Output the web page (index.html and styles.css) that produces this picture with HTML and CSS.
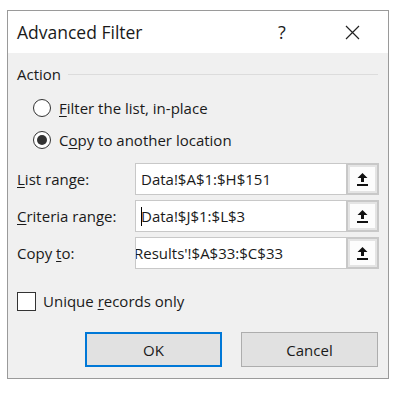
FILE: index.html
```html
<!DOCTYPE html>
<html lang="en">
<head>
	<meta charset="UTF-8">
	<title>Advanced Filter</title>
	<link rel="stylesheet" href="styles.css">
</head>
<body>
	<div class="dialog">
		<div class="title-bar">
			<span class="title">Advanced Filter</span>
			<span class="help">?</span>
			<span class="close">
				<svg width="15" height="15" viewBox="0 0 15 15"><path d="M1 1 L14 14 M14 1 L1 14" stroke="#222" stroke-width="1.2" fill="none"/></svg>
			</span>
		</div>
		<div class="dialog-body">
			<div class="group-title">
				<span>Action</span>
				<div class="group-line"></div>
			</div>
			<div class="radios">
				<label class="radio-row">
					<span class="radio"></span>
					<span><u>F</u>ilter the list, in-place</span>
				</label>
				<label class="radio-row">
					<span class="radio checked"></span>
					<span>C<u>o</u>py to another location</span>
				</label>
			</div>

			<div class="fields">
				<div class="field-row">
					<label class="field-label"><u>L</u>ist range:</label>
					<div class="range-box">
						<div class="range-text">Data!$A$1:$H$151</div>
						<div class="range-btn">
							<svg width="11" height="13" viewBox="0 0 11 13"><path d="M5.5 0 L10.5 5 L7 5 L7 9 L4 9 L4 5 L0.5 5 Z" fill="#111"/><rect x="0" y="11" width="11" height="2" fill="#111"/></svg>
						</div>
					</div>
				</div>
				<div class="field-row">
					<label class="field-label"><u>C</u>riteria range:</label>
					<div class="range-box">
						<div class="range-text"><span class="caret"></span>Data!$J$1:$L$3</div>
						<div class="range-btn">
							<svg width="11" height="13" viewBox="0 0 11 13"><path d="M5.5 0 L10.5 5 L7 5 L7 9 L4 9 L4 5 L0.5 5 Z" fill="#111"/><rect x="0" y="11" width="11" height="2" fill="#111"/></svg>
						</div>
					</div>
				</div>
				<div class="field-row">
					<label class="field-label">Copy <u>t</u>o:</label>
					<div class="range-box">
						<div class="range-text scrolled">Results'!$A$33:$C$33</div>
						<div class="range-btn">
							<svg width="11" height="13" viewBox="0 0 11 13"><path d="M5.5 0 L10.5 5 L7 5 L7 9 L4 9 L4 5 L0.5 5 Z" fill="#111"/><rect x="0" y="11" width="11" height="2" fill="#111"/></svg>
						</div>
					</div>
				</div>
			</div>

			<label class="check-row">
				<span class="checkbox"></span>
				<span>Unique <u>r</u>ecords only</span>
			</label>

			<div class="buttons">
				<div class="btn btn-default">OK</div>
				<div class="btn">Cancel</div>
			</div>
		</div>
	</div>
</body>
</html>
```

FILE: styles.css
```css
* {
	margin: 0;
	padding: 0;
	box-sizing: border-box;
}
body {
	background: #fff;
	font-family: "Segoe UI", "Open Sans", "Noto Sans", sans-serif;
	font-size: 15px;
	color: #1a1a1a;
	padding: 10px 0 0 7px;
}
u {
	text-decoration: underline;
	text-underline-offset: 2px;
	text-decoration-thickness: 1px;
}
.dialog {
	width: 382px;
	height: 369px;
	border: 1px solid #9a9a9a;
	background: #f0f0f0;
}
.title-bar {
	height: 42px;
	background: #fff;
	display: flex;
	align-items: center;
	padding-left: 9px;
}
.title {
	font-size: 17.5px;
	flex: 1;
	margin-top: -1px;
}
.help {
	font-size: 18px;
	width: 14px;
	margin-right: 53px;
}
.close {
	width: 15px;
	display: flex;
	margin-right: 28px;
}
.dialog-body {
	padding: 10px 9px 0 9px;
}
.group-title {
	display: flex;
	align-items: center;
	height: 22px;
}
.group-line {
	flex: 1;
	height: 1px;
	background: #dcdcdc;
	margin-left: 7px;
	margin-right: 1px;
}
.radios {
	margin-top: 7px;
}
.radio-row {
	display: flex;
	align-items: center;
	height: 32px;
	padding-left: 16px;
}
.radio {
	width: 18px;
	height: 18px;
	border: 1px solid #333;
	border-radius: 50%;
	background: #fff;
	margin-right: 8px;
	display: flex;
	align-items: center;
	justify-content: center;
}
.radio.checked::after {
	content: "";
	width: 10px;
	height: 10px;
	border-radius: 50%;
	background: #333;
}
.fields {
	margin-top: 7px;
	display: flex;
	flex-direction: column;
	gap: 5px;
}
.field-row {
	display: flex;
	align-items: center;
	height: 32px;
}
.field-label {
	width: 118px;
}
.range-box {
	width: 244px;
	height: 32px;
	display: flex;
	border: 1px solid #c8c8c8;
	background: #fff;
}
.range-text {
	flex: 1;
	display: flex;
	align-items: center;
	padding-left: 5px;
	overflow: hidden;
	white-space: nowrap;
}
.range-text.scrolled {
	padding-left: 0;
	text-indent: -2px;
}
.caret {
	width: 1px;
	height: 19px;
	background: #000;
	margin-right: -1px;
}
.range-btn {
	width: 33px;
	flex-shrink: 0;
	border: 2px solid #c8c8c8;
	box-shadow: inset 0 0 0 2px #e4e4e4;
	background: #fcfcfc;
	margin: -1px -1px -1px 0;
	display: flex;
	align-items: center;
	justify-content: center;
}
.check-row {
	display: flex;
	align-items: center;
	height: 32px;
	margin-top: 16px;
}
.checkbox {
	width: 19px;
	height: 19px;
	border: 1px solid #333;
	background: #fff;
	margin-right: 7px;
}
.buttons {
	display: flex;
	justify-content: flex-end;
	gap: 19px;
	margin-top: 15px;
	padding-right: 1px;
}
.btn {
	width: 137px;
	height: 35px;
	border: 1px solid #adadad;
	background: #e1e1e1;
	display: flex;
	align-items: center;
	justify-content: center;
}
.btn-default {
	border: 2px solid #0078d7;
}
```
